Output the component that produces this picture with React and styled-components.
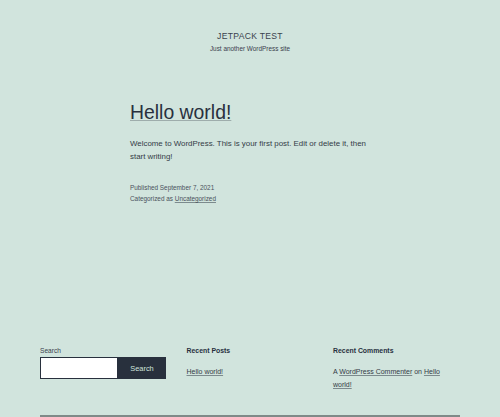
import React from "react";
import styled, { createGlobalStyle } from "styled-components";

const GlobalStyle = createGlobalStyle`
  html, body {
    margin: 0;
    padding: 0;
    background: #d1e4dd;
  }
  body {
    font-family: "Liberation Sans", Arial, sans-serif;
    color: #28303d;
  }
`;

const Page = styled.div`
  width: 500px;
  height: 417px;
  overflow: hidden;
  display: flex;
  flex-direction: column;
`;

const SiteHeader = styled.header`
  display: flex;
  flex-direction: column;
  align-items: center;
  padding-top: 31px;
`;

const SiteTitle = styled.div`
  font-size: 8.6px;
  letter-spacing: 0.3px;
  line-height: 10px;
  text-transform: uppercase;
  color: #3a424d;
`;

const Tagline = styled.div`
  margin-top: 4px;
  font-size: 6.4px;
  line-height: 8px;
  color: #3a424d;
`;

const Main = styled.main`
  box-sizing: border-box;
  width: 248px;
  margin: 47px auto 0;
  padding-left: 4px;
`;

const Title = styled.h1`
  margin: 0;
  font-size: 19.4px;
  font-weight: 400;
  line-height: 24px;

  & > a {
    color: inherit;
    text-decoration: underline;
    text-decoration-thickness: 1px;
    text-decoration-color: rgba(40, 48, 61, 0.3);
    text-underline-offset: 1px;
  }
`;

const Body = styled.p`
  margin: 13px 0 0;
  font-size: 7.9px;
  line-height: 13px;
  color: #333b46;
`;

const Meta = styled.div`
  margin-top: 19px;
  font-size: 6.4px;
  line-height: 11px;
  color: #4a525c;

  & a {
    color: inherit;
    text-decoration: underline;
    text-decoration-color: rgba(40, 48, 61, 0.5);
  }
`;

const Footer = styled.footer`
  margin-top: auto;
  padding: 0 40px;
`;

const Widgets = styled.div`
  display: grid;
  grid-template-columns: repeat(3, 1fr);
  column-gap: 19.5px;
`;

const Widget = styled.section`
  display: flex;
  flex-direction: column;
`;

const WidgetTitle = styled.h2`
  margin: 0;
  font-size: 6.9px;
  line-height: 8px;
  font-weight: 700;
  color: #28303d;
`;

const Label = styled.label`
  font-size: 6.6px;
  line-height: 8px;
  color: #3a424d;
`;

const SearchRow = styled.div`
  display: flex;
  margin-top: 2px;
  width: 126px;
`;

const SearchInput = styled.input`
  box-sizing: border-box;
  width: 78px;
  height: 22px;
  margin: 0;
  border: 1.5px solid #28303d;
  background: #fff;
  outline: none;
`;

const SearchButton = styled.button`
  box-sizing: border-box;
  flex: 1;
  height: 22px;
  margin: 0;
  border: none;
  background: #28303d;
  color: #d1e4dd;
  font-family: "Liberation Sans", Arial, sans-serif;
  font-size: 7.4px;
`;

const WidgetList = styled.div`
  margin-top: 11px;
  font-size: 7px;
  line-height: 12.5px;
  color: #333b46;

  & a {
    color: inherit;
    text-decoration: underline;
    text-decoration-color: rgba(40, 48, 61, 0.5);
  }
`;

const FooterRule = styled.div`
  margin-top: 24px;
  height: 0;
  border-top: 2.5px solid #7f8a88;
`;

export default function App() {
  return (
    <Page>
      <GlobalStyle />
      <SiteHeader>
        <SiteTitle>Jetpack Test</SiteTitle>
        <Tagline>Just another WordPress site</Tagline>
      </SiteHeader>
      <Main>
        <Title>
          <a href="#">Hello world!</a>
        </Title>
        <Body>
          Welcome to WordPress. This is your first post. Edit or delete it, then
          start writing!
        </Body>
        <Meta>
          <div>Published September 7, 2021</div>
          <div>
            Categorized as <a href="#">Uncategorized</a>
          </div>
        </Meta>
      </Main>
      <Footer>
        <Widgets>
          <Widget>
            <Label>Search</Label>
            <SearchRow>
              <SearchInput type="search" />
              <SearchButton>Search</SearchButton>
            </SearchRow>
          </Widget>
          <Widget>
            <WidgetTitle>Recent Posts</WidgetTitle>
            <WidgetList>
              <a href="#">Hello world!</a>
            </WidgetList>
          </Widget>
          <Widget>
            <WidgetTitle>Recent Comments</WidgetTitle>
            <WidgetList>
              A <a href="#">WordPress Commenter</a> on{" "}
              <a href="#">Hello world!</a>
            </WidgetList>
          </Widget>
        </Widgets>
        <FooterRule />
      </Footer>
    </Page>
  );
}
